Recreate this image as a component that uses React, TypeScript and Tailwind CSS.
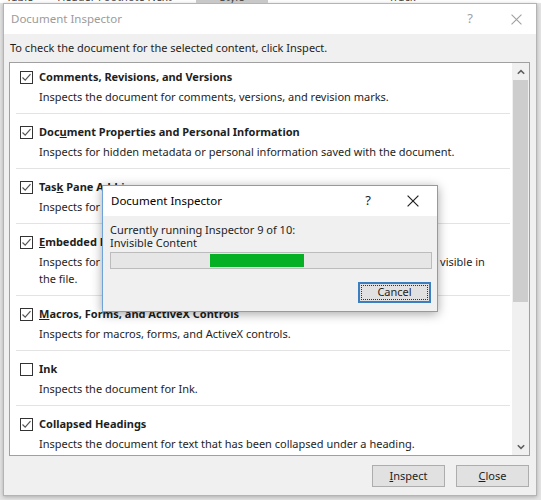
import React from "react";

type Item = {
  title: React.ReactNode;
  desc: string;
  checked: boolean;
};

const items: Item[] = [
  {
    title: "Comments, Revisions, and Versions",
    desc: "Inspects the document for comments, versions, and revision marks.",
    checked: true,
  },
  {
    title: (
      <>
        Doc<span className="underline">u</span>ment Properties and Personal Information
      </>
    ),
    desc: "Inspects for hidden metadata or personal information saved with the document.",
    checked: true,
  },
  {
    title: (
      <>
        Tas<span className="underline">k</span> Pane Add-ins
      </>
    ),
    desc: "Inspects for Task Pane add-ins saved in the document.",
    checked: true,
  },
  {
    title: (
      <>
        <span className="underline">E</span>mbedded Documents
      </>
    ),
    desc: "Inspects for embedded documents, which may include information that's not visible in the file.",
    checked: true,
  },
  {
    title: (
      <>
        <span className="underline">M</span>acros, Forms, and ActiveX Controls
      </>
    ),
    desc: "Inspects for macros, forms, and ActiveX controls.",
    checked: true,
  },
  {
    title: "Ink",
    desc: "Inspects the document for Ink.",
    checked: false,
  },
  {
    title: "Collapsed Headings",
    desc: "Inspects the document for text that has been collapsed under a heading.",
    checked: true,
  },
];

function CheckBox({ checked }: { checked: boolean }) {
  return (
    <span className="flex h-[13px] w-[13px] shrink-0 items-center justify-center border border-[#333] bg-white">
      {checked && (
        <svg width="11" height="11" viewBox="0 0 11 11">
          <path d="M1.5 5.5 L4.2 8.2 L9.5 2.2" fill="none" stroke="#555" strokeWidth="1.2" />
        </svg>
      )}
    </span>
  );
}

function CloseGlyph({ color, size }: { color: string; size: number }) {
  return (
    <svg width={size} height={size} viewBox="0 0 10 10">
      <path d="M0.5 0.5 L9.5 9.5 M9.5 0.5 L0.5 9.5" stroke={color} strokeWidth="1" fill="none" />
    </svg>
  );
}

function Chevron({ up }: { up: boolean }) {
  return (
    <svg width="8" height="6" viewBox="0 0 8 6">
      <path
        d={up ? "M0.8 4.8 L4 1.6 L7.2 4.8" : "M0.8 1.2 L4 4.4 L7.2 1.2"}
        fill="none"
        stroke="#606060"
        strokeWidth="1.6"
      />
    </svg>
  );
}

export default function App() {
  return (
    <div
      className="relative h-[500px] w-[541px] overflow-hidden bg-[#e4e4e4] text-[11px] text-[#1e1e1e]"
      style={{ fontFamily: '"Noto Sans", "Open Sans", sans-serif' }}
    >
      {/* strip of the Word ribbon behind the dialog */}
      <div className="h-[3px] overflow-hidden bg-white">
        <div className="-mt-[11px] flex gap-6 whitespace-nowrap pl-[6px] text-[11px] text-[#444]">
          <span>Table</span>
          <span>Header Footnote Next</span>
          <span className="bg-[#c8c8c8] px-6">Style</span>
          <span className="pl-24">Track</span>
          <span className="pl-40">Accept Reject</span>
        </div>
      </div>

      {/* main dialog */}
      <div className="ml-[3px] flex h-[493px] w-[534px] flex-col border border-[#b4b4b4] bg-[#f0f0f0] shadow-[0_1px_4px_rgba(0,0,0,0.25)]">
        <div className="flex h-[30px] shrink-0 items-center bg-white pl-[7px]">
          <span className="text-[11.5px] text-[#9b9b9b]">Document Inspector</span>
          <span className="ml-auto mr-[38px] text-[13px] text-[#a0a0a0]">?</span>
          <span className="mr-[14px]">
            <CloseGlyph color="#a0a0a0" size={11} />
          </span>
        </div>

        <div className="pl-[6px] pt-[7px] leading-[14px]">
          To check the document for the selected content, click Inspect.
        </div>

        <div className="ml-[5px] mt-[7px] flex h-[394px] w-[521px] border border-[#a0a0a0] bg-white">
          <div className="flex-1 overflow-hidden pl-[6px] pr-[2px]">
            {items.map((it, i) => (
              <div
                key={i}
                className={
                  i === 0
                    ? "pb-[7.5px] pl-[4px] pt-[6px]"
                    : "border-t border-[#e3e3e3] pb-[7.5px] pl-[4px] pt-[10px]"
                }
              >
                <div className="flex h-[17px] items-center gap-[6px]">
                  <CheckBox checked={it.checked} />
                  <span className="font-bold">{it.title}</span>
                </div>
                <div className="mt-[3px] pl-[19px] pr-[8px] leading-[16.5px]">{it.desc}</div>
              </div>
            ))}
          </div>
          <div className="flex w-[17px] shrink-0 flex-col bg-[#f0f0f0]">
            <div className="flex h-[17px] items-center justify-center">
              <Chevron up />
            </div>
            <div className="mx-[1px] h-[222px] bg-[#cdcdcd]" />
            <div className="flex-1" />
            <div className="flex h-[17px] items-center justify-center">
              <Chevron up={false} />
            </div>
          </div>
        </div>

        <div className="mr-[7px] mt-[9px] flex justify-end gap-[11px]">
          <button className="h-[22px] w-[73px] border border-[#adadad] bg-[#e1e1e1] text-[11px]">
            <span className="underline">I</span>nspect
          </button>
          <button className="h-[22px] w-[73px] border border-[#adadad] bg-[#e1e1e1] text-[11px]">
            <span className="underline">C</span>lose
          </button>
        </div>
      </div>

      {/* progress popup */}
      <div className="absolute left-[102px] top-[185px] flex h-[127px] w-[336px] flex-col border border-[#6fa3d8] bg-[#f0f0f0] shadow-[0_2px_10px_rgba(0,0,0,0.35)]">
        <div className="flex h-[30px] shrink-0 items-center bg-white pl-[8px]">
          <span className="text-[11.5px] text-black">Document Inspector</span>
          <span className="ml-auto mr-[36px] text-[13px] text-[#222]">?</span>
          <span className="mr-[18px]">
            <CloseGlyph color="#222" size={12} />
          </span>
        </div>
        <div className="pl-[7px] pr-[5px] pt-[7px]">
          <div className="leading-[13px]">Currently running Inspector 9 of 10:</div>
          <div className="leading-[13px]">Invisible Content</div>
          <div className="mt-[3px] h-[17px] w-[322px] border border-[#bcbcbc] bg-[#e6e6e6] py-[1px] pl-[99px]">
            <div className="h-full w-[94px] bg-[#06b025]" />
          </div>
          <div className="mt-[13px] flex justify-end pr-[1px]">
            <button className="flex h-[21px] w-[73px] items-center justify-center border-2 border-[#3c7fc0] bg-[#e1e1e1] p-[1px] text-[11px]">
              <span className="flex h-full w-full items-center justify-center border border-dotted border-[#333]">
                Cancel
              </span>
            </button>
          </div>
        </div>
      </div>
    </div>
  );
}
